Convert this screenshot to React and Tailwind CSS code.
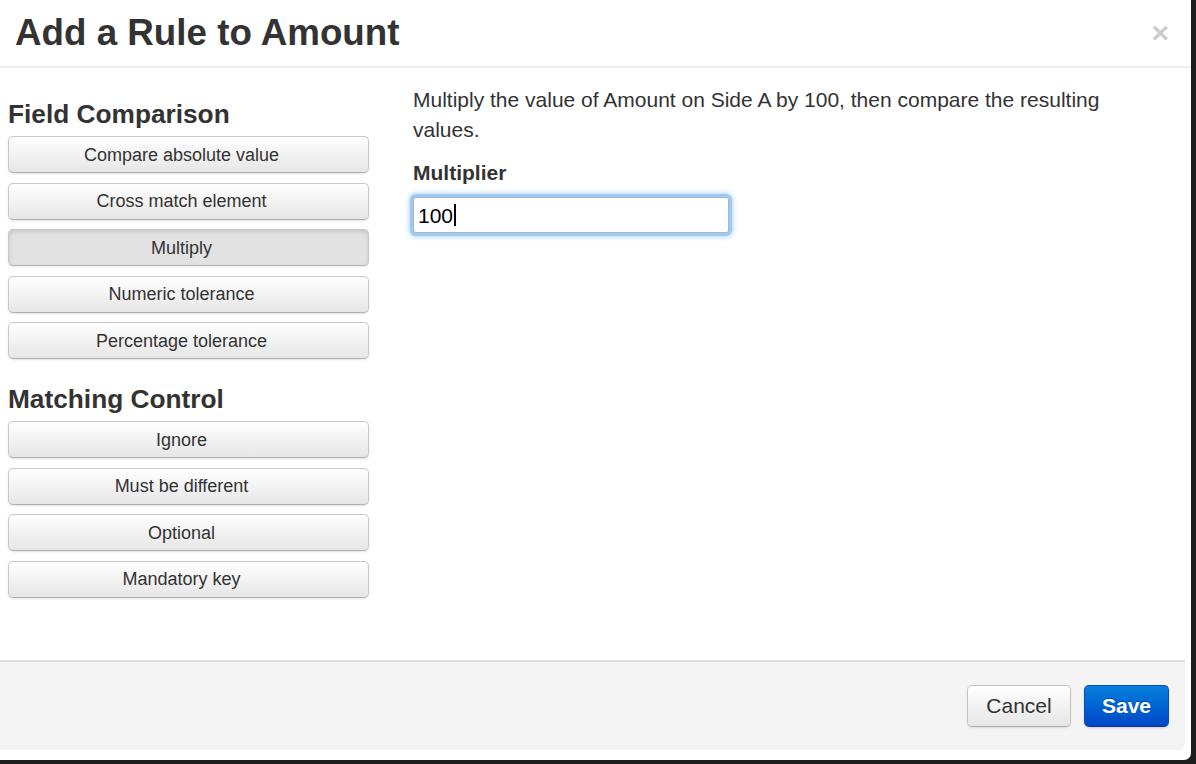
const fieldRules = [
  "Compare absolute value",
  "Cross match element",
  "Multiply",
  "Numeric tolerance",
  "Percentage tolerance",
];

const controlRules = ["Ignore", "Must be different", "Optional", "Mandatory key"];

const RuleButton = ({ label, active }) => {
  return (
    <button
      className={`w-full h-[37px] pr-[14px] pt-[1px] rounded-[5px] border border-[#c8c8c8] border-b-[#b0b0b0] text-[18px] text-[#333] ${
        active
          ? "bg-[#e2e2e2] shadow-[inset_0_2px_4px_rgba(0,0,0,0.12),0_1px_2px_rgba(0,0,0,0.08)]"
          : "bg-linear-to-b from-white to-[#e6e6e6] shadow-[0_1px_2px_rgba(0,0,0,0.12)]"
      }`}
    >
      {label}
    </button>
  );
};

const RuleGroup = ({ title, rules, active, className }) => {
  return (
    <div className={className}>
      <h4 className="text-[26.25px] leading-[30px] font-bold text-[#333] mb-[7px]">
        {title}
      </h4>
      <div className="flex flex-col gap-[9.5px]">
        {rules.map((rule) => (
          <RuleButton key={rule} label={rule} active={rule === active} />
        ))}
      </div>
    </div>
  );
};

const App = () => {
  return (
    <div
      className="w-full h-screen bg-[#1d1d1d] text-[#333]"
      style={{ fontFamily: '"Liberation Sans", Arial, sans-serif' }}
    >
      <div className="w-[1191px] h-[760px] bg-white rounded-br-[7px] flex flex-col">
        <div className="h-[68px] border-b-2 border-[#eeeeee] flex items-center justify-between pl-[15px] pr-[22px]">
          <h3 className="text-[36.75px] leading-none font-bold text-[#333]">
            Add a Rule to Amount
          </h3>
          <span className="text-[30px] leading-none font-bold text-[#cccccc]">×</span>
        </div>

        <div className="flex-1 flex pl-[8px]">
          <div className="w-[361px] pt-[31px]">
            <RuleGroup title="Field Comparison" rules={fieldRules} active="Multiply" />
            <RuleGroup
              title="Matching Control"
              rules={controlRules}
              className="mt-[25px]"
            />
          </div>

          <div className="w-[740px] ml-[44px] pt-[17px] text-[21px] leading-[30px]">
            <p>
              Multiply the value of Amount on Side A by 100, then compare the resulting
              values.
            </p>
            <label className="block mt-[13px] mb-[9px] font-bold">Multiplier</label>
            <div className="w-[316px] h-[36px] rounded-[3px] border border-[#b4b4b4] bg-white flex items-center pl-[4px] shadow-[0_0_0_3px_#9ccaf8,0_0_5px_4px_rgba(82,168,236,0.45)]">
              <span className="text-[21px] text-black leading-none">100</span>
              <span className="w-[2px] h-[22px] bg-black ml-[1px]" />
            </div>
          </div>
        </div>

        <div className="h-[90px] mb-[10px] mr-[6px] border-t-2 border-[#dddddd] bg-[#f4f4f4] rounded-br-[6px] flex items-center justify-end gap-[13px] pr-[16px]">
          <button className="w-[104px] h-[42px] rounded-[5px] border border-[#c4c4c4] border-b-[#adadad] bg-linear-to-b from-white to-[#e6e6e6] text-[21px] text-[#333] shadow-[0_1px_2px_rgba(0,0,0,0.1)]">
            Cancel
          </button>
          <button className="w-[85px] h-[42px] rounded-[5px] border border-[#0a4cbf] border-b-[#06389a] bg-linear-to-b from-[#0b7fdd] to-[#0446c6] text-[21px] font-bold text-white shadow-[0_1px_2px_rgba(0,0,0,0.15)] [text-shadow:0_-1px_0_rgba(0,0,0,0.25)]">
            Save
          </button>
        </div>
      </div>
    </div>
  );
};

export default App;
